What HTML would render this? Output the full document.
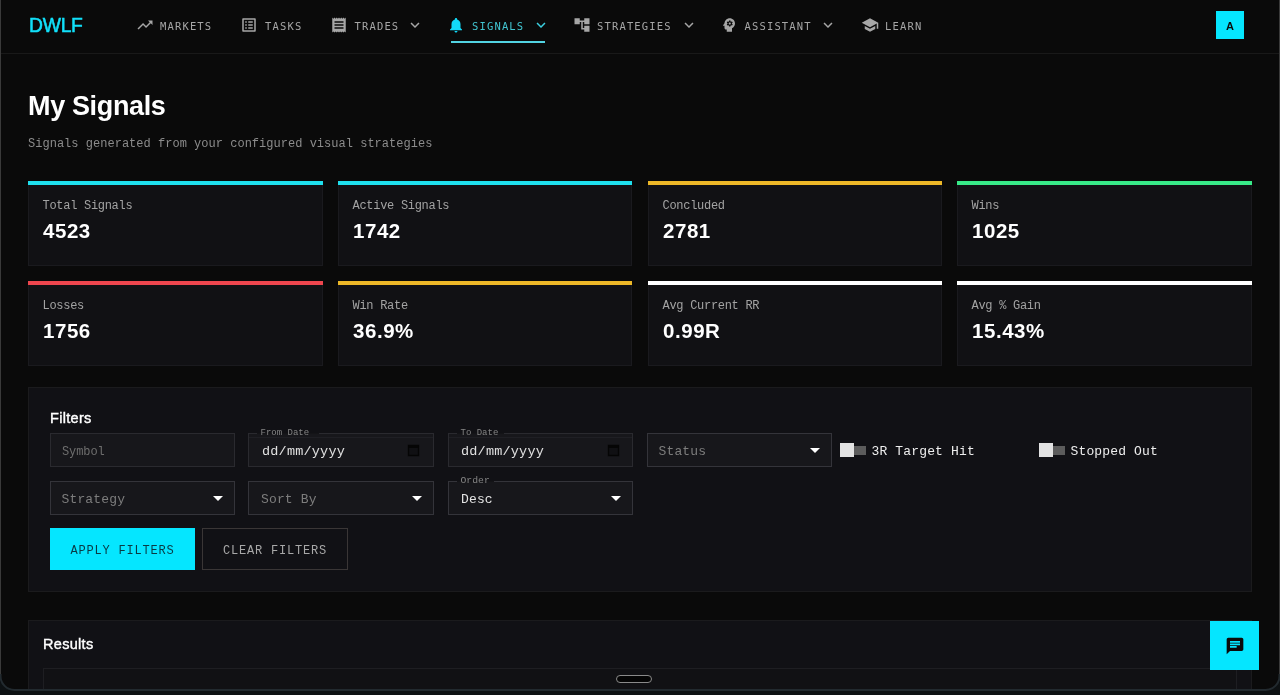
<!DOCTYPE html>
<html lang="en">
<head>
<meta charset="utf-8">
<title>DWLF - My Signals</title>
<style>
*{box-sizing:border-box;margin:0;padding:0}
html,body{width:1280px;height:695px;overflow:hidden;background:#0a0a0a}
body{position:relative;font-family:"Liberation Mono",monospace;color:#fff}
#app{position:absolute;left:0;top:0;width:1280px;height:695px;overflow:hidden;will-change:transform}
.abs{position:absolute}
.sans{font-family:"Liberation Sans",sans-serif}
/* nav */
#nav{position:absolute;left:0;top:0;width:1280px;height:54px;border-bottom:1px solid #191919;background:#0a0a0a}
#logo{position:absolute;left:28.500px;top:12px;font:21px/26px "Liberation Sans",sans-serif;color:#12e0fa;-webkit-text-stroke:.55px #12e0fa;letter-spacing:-.3px;white-space:nowrap;transform:scaleX(.92);transform-origin:0 0}
.ni{position:absolute;top:16px;width:18px;height:18px;fill:#a6a6a6}
.on.nt{color:#42c6d2}
.nt{position:absolute;top:18px;font:10.5px/16px "DejaVu Sans Mono","Liberation Mono",monospace;letter-spacing:1.15px;color:#a6a6a6;white-space:nowrap}
.on{color:#22d3ee;fill:#22d3ee}
#uline{position:absolute;left:451px;top:41px;width:94px;height:2px;background:#52d3e2}
#avatar{position:absolute;left:1216px;top:11px;width:28px;height:28px;background:#05e6ff;color:#0b0b0b;font:bold 11px/30px "Liberation Sans",sans-serif;text-align:center}
/* heading */
#h1{position:absolute;left:28px;top:90px;font:bold 27px/32px "Liberation Sans",sans-serif;color:#fff;letter-spacing:-.35px;white-space:nowrap}
#sub{position:absolute;left:28px;top:136px;font:12px/16px "Liberation Mono",monospace;letter-spacing:.02px;color:#8c8c8c;white-space:nowrap}
/* cards */
.card{position:absolute;width:295px;height:85px;background:#111114;border:1px solid #1a1a1e;color:#22d3ee}
.card:before{content:"";position:absolute;left:-1px;top:-1px;right:-1px;height:4px;background:currentColor}
.card .l{position:absolute;left:13.500px;top:16px;font:12px/16px "Liberation Mono",monospace;letter-spacing:-.29px;color:#a3a3a3;white-space:nowrap}
.card .v{position:absolute;left:14px;top:36px;font:bold 20.5px/26px "Liberation Sans",sans-serif;color:#fff;letter-spacing:.55px;white-space:nowrap}
/* panels */
.panel{position:absolute;left:28px;width:1224px;background:#111115;border:1px solid #1b1b1d}
.ptitle{position:absolute;font:14.5px/20px "Liberation Sans",sans-serif;letter-spacing:.3px;color:#fff;-webkit-text-stroke:.4px #fff}
.fld{position:absolute;width:185px;height:34px;border:1px solid #34343a;background:#17171b}
.fld .tx{position:absolute;left:10.500px;top:9px;font:13px/18px "Liberation Mono",monospace;letter-spacing:.15px;color:#7d7d7d;white-space:nowrap}
.fld .lg{position:absolute;left:8px;top:-1px;height:1px;background:#141417;white-space:nowrap}
.fld .lg span{position:absolute;left:3.500px;top:-5px;font:9px/10px "Liberation Mono",monospace;letter-spacing:0;color:#858585}
.caret{position:absolute;right:11px;top:14px;width:0;height:0;border-left:5px solid transparent;border-right:5px solid transparent;border-top:5px solid #fff}
.tog{position:absolute;top:446px;width:26px;height:9px;background:#5c5c5c}
.tog i{position:absolute;left:0;top:-3px;width:14px;height:14px;background:#e2e2e2}
.tl{position:absolute;top:443px;font:13px/18px "Liberation Mono",monospace;letter-spacing:.15px;color:#eee;white-space:nowrap}
.btn{position:absolute;top:528px;height:42px;font:12px/47px "Liberation Mono",monospace;letter-spacing:.8px;text-align:center;white-space:nowrap}
</style>
</head>
<body>
<div id="app">
<div id="nav">
  <div id="logo">DWLF</div>

  <svg class="ni" style="left:135.5px" viewBox="0 0 24 24"><path d="M16 6l2.29 2.29-4.88 4.88-4-4L2 16.59 3.410 18l6-6 4 4 6.300-6.290L22 12V6z"/></svg>
  <div class="nt" style="left:160px">MARKETS</div>

  <svg class="ni" style="left:240px" viewBox="0 0 24 24"><path d="M11 7h6v2h-6zm0 4h6v2h-6zm0 4h6v2h-6zM7 7h2v2H7zm0 4h2v2H7zm0 4h2v2H7zM20.100 3H3.900c-.5 0-.9.400-.9.900v16.200c0 .4.400.9.900.9h16.200c.4 0 .9-.5.900-.9V3.900c0-.5-.5-.9-.9-.9zM19 19H5V5h14v14z"/></svg>
  <div class="nt" style="left:265px">TASKS</div>

  <svg class="ni" style="left:329.500px" viewBox="0 0 24 24"><path d="M18 17H6v-2h12v2zm0-4H6v-2h12v2zm0-4H6V7h12v2zM3 22l1.500-1.500L6 22l1.500-1.500L9 22l1.500-1.500L12 22l1.500-1.500L15 22l1.500-1.500L18 22l1.500-1.500L21 22V2l-1.500 1.500L18 2l-1.500 1.500L15 2l-1.500 1.500L12 2l-1.500 1.500L9 2 7.500 3.500 6 2 4.500 3.500 3 2v20z"/></svg>
  <div class="nt" style="left:354.500px">TRADES</div>
  <svg class="ni" style="left:406px" viewBox="0 0 24 24"><path d="M16.590 8.590L12 13.170 7.410 8.590 6 10l6 6 6-6z"/></svg>

  <svg class="ni on" style="left:447px;fill:#12d9f8" viewBox="0 0 24 24"><path d="M12 22c1.100 0 2-.9 2-2h-4c0 1.100.89 2 2 2zm6-6v-5c0-3.070-1.640-5.640-4.500-6.320V4c0-.83-.67-1.500-1.500-1.500s-1.500.67-1.500 1.500v.68C7.630 5.360 6 7.920 6 11v5l-2 2v1h16v-1l-2-2z"/></svg>
  <div class="nt on" style="left:472px">SIGNALS</div>
  <svg class="ni on" style="left:531.500px;fill:#3bd0e0" viewBox="0 0 24 24"><path d="M16.590 8.590L12 13.170 7.410 8.590 6 10l6 6 6-6z"/></svg>
  <div id="uline"></div>

  <svg class="ni" style="left:572.800px" viewBox="0 0 24 24"><path d="M22 11V3h-7v3H9V3H2v8h7V8h2v10h4v3h7v-8h-7v3h-2V8h2v3z"/></svg>
  <div class="nt" style="left:597px">STRATEGIES</div>
  <svg class="ni" style="left:679.500px" viewBox="0 0 24 24"><path d="M16.590 8.590L12 13.170 7.410 8.590 6 10l6 6 6-6z"/></svg>

  <svg class="ni" style="left:720px" viewBox="0 0 24 24"><path d="M13 8.570c-.79 0-1.430.64-1.430 1.430s.64 1.430 1.430 1.430 1.430-.64 1.430-1.430-.64-1.430-1.430-1.430z"/><path d="M13 3C9.250 3 6.200 5.940 6.020 9.640L4.100 12.200c-.25.330-.01.800.4.800H6v3c0 1.100.9 2 2 2h1v3h7v-4.680c2.360-1.120 4-3.530 4-6.320 0-3.870-3.130-7-7-7zm3 7c0 .13-.01.260-.02.390l.83.660c.08.060.1.160.05.250l-.8 1.390c-.05.090-.16.120-.24.090l-.99-.4c-.21.160-.43.290-.67.390L14 13.830c-.01.100-.1.170-.2.170h-1.600c-.1 0-.18-.07-.2-.17l-.15-1.060c-.25-.1-.47-.23-.68-.39l-.99.4c-.09.030-.2 0-.25-.09l-.8-1.390c-.05-.08-.03-.19.050-.25l.84-.66c-.01-.13-.02-.26-.02-.39s.02-.27.040-.39l-.85-.66c-.08-.06-.1-.16-.05-.26l.8-1.380c.05-.09.150-.12.240-.09l1 .4c.2-.15.430-.29.670-.39L12 6.170c.02-.1.100-.17.200-.17h1.600c.1 0 .18.070.2.170l.15 1.060c.24.100.46.230.67.390l1-.4c.09-.3.200 0 .24.090l.8 1.380c.05.090.03.200-.05.260l-.85.660c.03.120.04.250.04.390z"/></svg>
  <div class="nt" style="left:744.500px">ASSISTANT</div>
  <svg class="ni" style="left:818.500px" viewBox="0 0 24 24"><path d="M16.590 8.590L12 13.170 7.410 8.590 6 10l6 6 6-6z"/></svg>

  <svg class="ni" style="left:860.500px" viewBox="0 0 24 24"><path d="M5 13.180v4L12 21l7-3.820v-4L12 17l-7-3.820zM12 3L1 9l11 6 9-4.910V17h2V9L12 3z"/></svg>
  <div class="nt" style="left:885px">LEARN</div>

  <div id="avatar">A</div>
</div>

<div id="h1">My Signals</div>
<div id="sub">Signals generated from your configured visual strategies</div>

<div class="card" style="left:28px;top:181px;color:#1fe0ee"><div class="l">Total Signals</div><div class="v">4523</div></div>
<div class="card" style="left:338px;width:294px;top:181px;color:#1fe0ee"><div class="l">Active Signals</div><div class="v">1742</div></div>
<div class="card" style="left:648px;width:294px;top:181px;color:#edb828"><div class="l">Concluded</div><div class="v">2781</div></div>
<div class="card" style="left:957px;top:181px;color:#38ea88"><div class="l">Wins</div><div class="v">1025</div></div>
<div class="card" style="left:28px;top:281px;color:#ef464e"><div class="l">Losses</div><div class="v">1756</div></div>
<div class="card" style="left:338px;width:294px;top:281px;color:#edb828"><div class="l">Win Rate</div><div class="v">36.9%</div></div>
<div class="card" style="left:648px;width:294px;top:281px;color:#ffffff"><div class="l">Avg Current RR</div><div class="v">0.99R</div></div>
<div class="card" style="left:957px;top:281px;color:#ffffff"><div class="l">Avg % Gain</div><div class="v">15.43%</div></div>

<div class="panel" style="top:387px;height:205px"></div>
<div class="ptitle" style="left:50px;top:408px">Filters</div>

<div class="fld" style="left:50px;top:433px;border-color:#2a2a2f"><div class="tx" style="font-size:12px;letter-spacing:-.1px;color:#6e6e6e;left:11px">Symbol</div></div>
<div class="fld" style="left:248px;top:433px;width:186px;border-color:#2a2a2f"><div class="lg" style="width:62px"><span>From Date</span></div><div class="abs" style="left:0;right:0;top:3px;height:1px;background:#1f1f24"></div><div class="tx" style="font-size:13.5px;color:#e0e0e0;letter-spacing:.2px;top:9px;left:13px">dd/mm/yyyy</div>
  <svg class="abs" style="left:158px;top:9.500px" width="13" height="13" viewBox="0 0 13 13"><path d="M1.500 1.500h10v10h-10z" fill="#101013" stroke="#050505" stroke-width="1.400"/><path d="M1.500 1h10v3h-10z" fill="#050505"/></svg></div>
<div class="fld" style="left:448px;top:433px;border-color:#2a2a2f"><div class="lg" style="width:47px"><span>To Date</span></div><div class="abs" style="left:0;right:0;top:3px;height:1px;background:#1f1f24"></div><div class="tx" style="font-size:13.5px;color:#e0e0e0;letter-spacing:.2px;top:9px;left:12px">dd/mm/yyyy</div>
  <svg class="abs" style="left:158px;top:9.500px" width="13" height="13" viewBox="0 0 13 13"><path d="M1.500 1.500h10v10h-10z" fill="#101013" stroke="#050505" stroke-width="1.400"/><path d="M1.500 1h10v3h-10z" fill="#050505"/></svg></div>
<div class="fld" style="left:647px;top:433px"><div class="tx">Status</div><div class="caret"></div></div>

<div class="tog" style="left:840px"><i></i></div><div class="tl" style="left:871.500px">3R Target Hit</div>
<div class="tog" style="left:1039px"><i></i></div><div class="tl" style="left:1070.500px">Stopped Out</div>

<div class="fld" style="left:50px;top:481px"><div class="tx">Strategy</div><div class="caret"></div></div>
<div class="fld" style="left:248px;top:481px;width:186px"><div class="tx" style="left:12px">Sort By</div><div class="caret"></div></div>
<div class="fld" style="left:448px;top:481px"><div class="lg" style="width:37px"><span style="font-size:9.75px">Order</span></div><div class="tx" style="color:#e4e4e4;left:12px">Desc</div><div class="caret"></div></div>

<div class="btn" style="left:50px;width:145px;background:#05e6ff;color:#0a3a44">APPLY FILTERS</div>
<div class="btn" style="left:202px;width:146px;border:1px solid #3a3636;color:#a8a8a8;line-height:45px">CLEAR FILTERS</div>

<div class="panel" style="top:620px;height:90px"></div>
<div class="ptitle" style="left:43px;top:634px">Results</div>
<div class="abs" style="left:43px;top:668px;width:1194px;height:40px;border:1px solid #1e1e22;background:#111114"></div>

<!-- chat fab -->
<div class="abs" style="left:1210px;top:621px;width:49px;height:49px;background:#05e6ff">
  <svg class="abs" style="left:14.500px;top:14.500px" width="20" height="20" viewBox="0 0 24 24"><path fill="#0b0b0b" d="M20 2H4c-1.100 0-1.990.9-1.990 2L2 22l4-4h14c1.100 0 2-.9 2-2V4c0-1.100-.9-2-2-2zM6 9h12v2H6V9zm8 5H6v-2h8v2zm4-6H6V6h12v2z"/></svg>
</div>

<!-- device frame -->
<div class="abs" style="left:0;top:0;width:1px;height:695px;background:#3a3a3a"></div>
<div class="abs" style="left:1279px;top:0;width:1px;height:695px;background:#3a3a3a"></div>
<div class="abs" style="left:616px;top:675px;width:36px;height:8px;border:1px solid #8a8a8a;border-radius:4px;background:#050505"></div>
<svg class="abs" style="left:0;top:660px" width="1280" height="35" viewBox="0 0 1280 35">
  <path d="M0 16V35H1280V16h-1v0a14 14 0 0 1-14 14H15A14 14 0 0 1 1 16z" fill="#0d1113"/>
  <path d="M0.500 14v2a14 14 0 0 0 14 14H1265.500a14 14 0 0 0 14-14v-2" fill="none" stroke="#222a2f" stroke-width="2"/>
</svg>
</div>
</body>
</html>
